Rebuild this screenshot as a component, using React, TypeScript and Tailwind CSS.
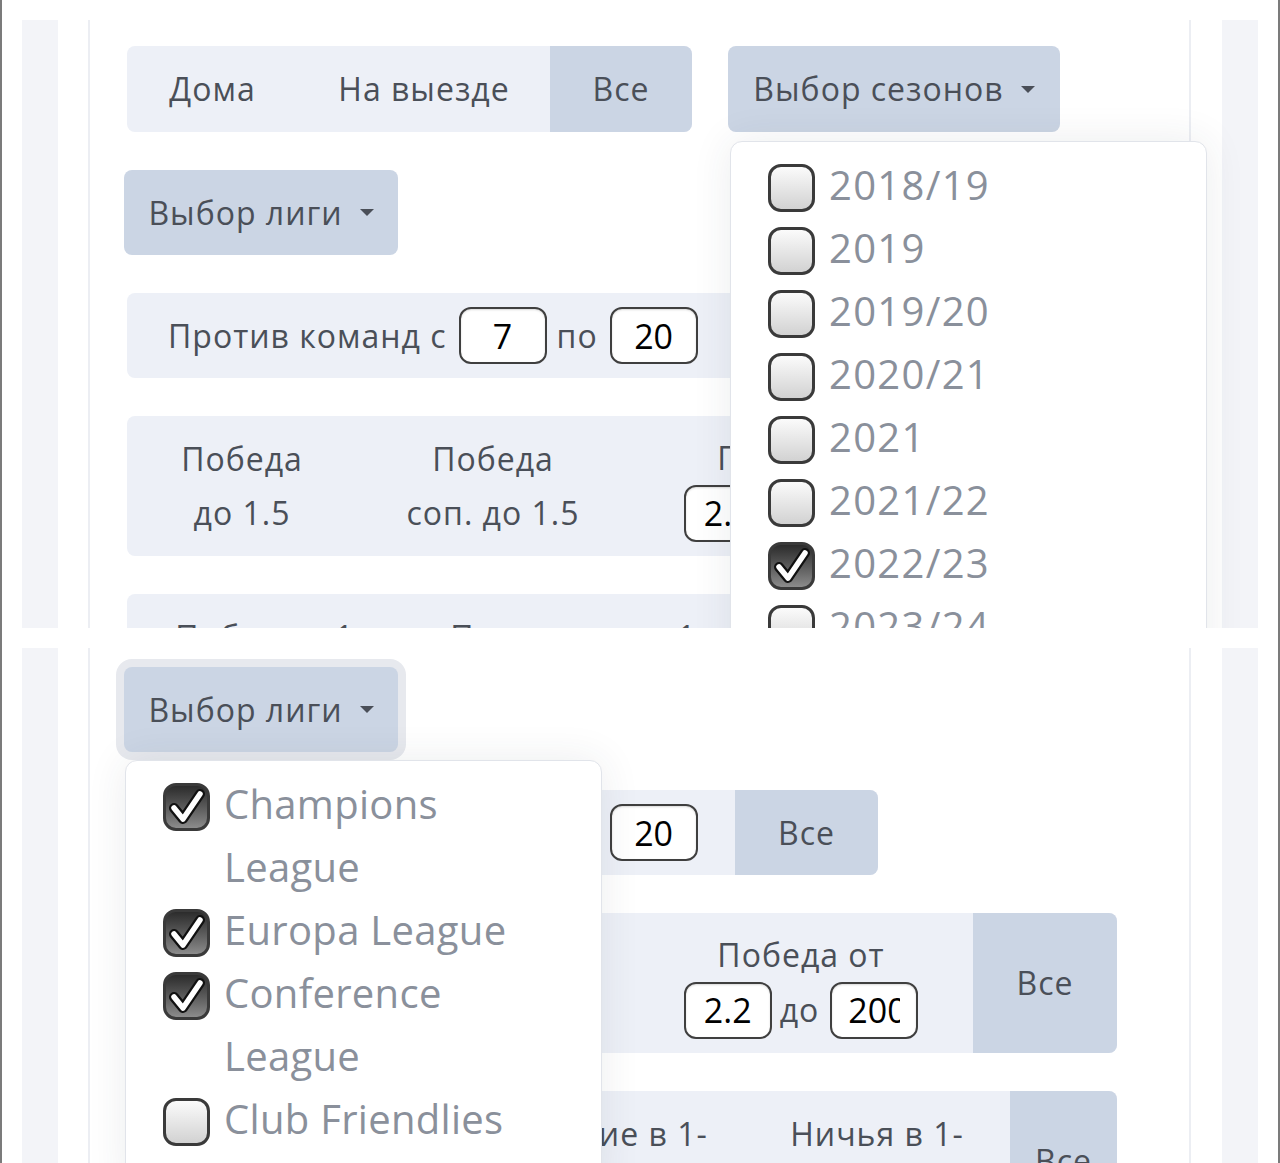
import React from 'react';

type Open = 'seasons' | 'leagues';
type Item = { label: string; checked: boolean };

const seasons: Item[] = [
  { label: '2018/19', checked: false },
  { label: '2019', checked: false },
  { label: '2019/20', checked: false },
  { label: '2020/21', checked: false },
  { label: '2021', checked: false },
  { label: '2021/22', checked: false },
  { label: '2022/23', checked: true },
  { label: '2023/24', checked: false },
  { label: '2024/25', checked: false },
];

const leagues: Item[] = [
  { label: 'Champions League', checked: true },
  { label: 'Europa League', checked: true },
  { label: 'Conference League', checked: true },
  { label: 'Club Friendlies', checked: false },
];

const Caret: React.FC = () => (
  <span className="ml-[17px] inline-block h-0 w-0 border-x-[7px] border-t-[7px] border-x-transparent border-t-[#4a4f58]" />
);

const Checkbox: React.FC<{ checked: boolean }> = ({ checked }) => (
  <span
    className={
      'mt-[11px] flex h-[48px] w-[47px] shrink-0 items-center justify-center rounded-[13px] border-[3px] border-[#3a3a3a] ' +
      (checked ? 'bg-linear-to-b from-[#2c2c2c] to-[#8c8c8c]' : 'bg-linear-to-b from-[#fbfbfb] to-[#d2d2d2]')
    }
  >
    {checked && (
      <svg width="40" height="40" viewBox="0 0 40 40">
        <path d="M7 21 L16 32 L33 7" fill="none" stroke="#111" strokeWidth="10" strokeLinecap="round" strokeLinejoin="round" />
        <path d="M7 21 L16 32 L33 7" fill="none" stroke="#fff" strokeWidth="5.5" strokeLinecap="round" strokeLinejoin="round" />
      </svg>
    )}
  </span>
);

const Menu: React.FC<{ items: Item[]; className: string; wide?: boolean }> = ({ items, className, wide }) => (
  <div
    className={
      'absolute z-10 w-[477px] rounded-[12px] border border-[#e1e4ea] bg-white pb-[40px] pl-[37px] pr-[37px] pt-[11px] shadow-[0_0_40px_rgba(40,50,70,0.09)] ' +
      className
    }
  >
    {items.map((it) => (
      <label key={it.label} className="flex items-start gap-[14px]">
        <Checkbox checked={it.checked} />
        <span
          className={
            'text-[40px] leading-[63px] text-[#8a909b] ' + (wide ? 'tracking-[1.3px]' : 'tracking-[0.3px]')
          }
        >
          {it.label}
        </span>
      </label>
    ))}
  </div>
);

const NumInput: React.FC<{ value: string; className?: string }> = ({ value, className = '' }) => (
  <input
    readOnly
    value={value}
    className={
      "h-[57px] w-[88px] shrink-0 rounded-[12px] border-2 border-[#3f3f3f] bg-white px-[16px] text-center font-['Open_Sans',sans-serif] text-[34px] tracking-normal text-black shadow-[inset_0_1px_2px_rgba(0,0,0,0.15)] outline-none " +
      className
    }
  />
);

const Page: React.FC<{ open: Open }> = ({ open }) => (
  <div className="flex pt-[20px]">
    <div className="w-[20px] shrink-0" />
    <div className="w-[36px] shrink-0 bg-[#f3f4f8]" />
    <div className="w-[30px] shrink-0" />
    <div className="w-[2px] shrink-0 bg-[#eceef3]" />

    <main className="flex min-w-0 flex-1 flex-col items-start gap-[38px] pb-[160px] pl-[37px] pt-[26px]">
      <div className="flex items-start gap-[36px]">
        <div className="flex h-[86px] overflow-hidden rounded-[8px] bg-[#edf0f7]">
          <span className="flex w-[171px] items-center justify-center">Дома</span>
          <span className="flex w-[252px] items-center justify-center">На выезде</span>
          <span className="flex w-[142px] items-center justify-center bg-[#cbd5e4]">Все</span>
        </div>
        <div className="relative">
          <button className="flex h-[86px] w-[332px] items-center justify-center rounded-[8px] bg-[#cbd5e4]">
            Выбор сезонов
            <Caret />
          </button>
          {open === 'seasons' && <Menu items={seasons} wide className="left-[2px] top-[95px]" />}
        </div>
      </div>

      <div className="relative -ml-[3px]">
        <button
          className={
            'flex h-[85px] w-[274px] items-center justify-center rounded-[8px] bg-[#cbd5e4] ' +
            (open === 'leagues' ? 'ring-8 ring-[#e7e9ee]' : '')
          }
        >
          Выбор лиги
          <Caret />
        </button>
        {open === 'leagues' && <Menu items={leagues} className="left-[1px] top-[93px]" />}
      </div>

      <div className="flex h-[85px] overflow-hidden rounded-[8px] bg-[#edf0f7]">
        <div className="flex w-[608px] items-center pl-[41px]">
          <span>Против команд с</span>
          <NumInput value="7" className="ml-[12px]" />
          <span className="ml-[10px]">по</span>
          <NumInput value="20" className="ml-[12px]" />
        </div>
        <div className="flex w-[143px] items-center justify-center bg-[#cbd5e4]">Все</div>
      </div>

      <div className="flex h-[140px] overflow-hidden rounded-[8px] bg-[#edf0f7] leading-[54px]">
        <div className="flex w-[230px] flex-col items-center justify-center text-center">
          <span>Победа</span>
          <span>до 1.5</span>
        </div>
        <div className="flex w-[272px] flex-col items-center justify-center text-center">
          <span>Победа</span>
          <span>соп. до 1.5</span>
        </div>
        <div className="flex w-[344px] flex-col items-center justify-center text-center">
          <span>Победа от</span>
          <div className="flex items-center">
            <NumInput value="2.2" />
            <span className="ml-[8px]">до</span>
            <NumInput value="200" className="ml-[11px]" />
          </div>
        </div>
        <div className="flex w-[144px] items-center justify-center bg-[#cbd5e4]">Все</div>
      </div>

      <div className="flex h-[140px] overflow-hidden rounded-[8px] bg-[#edf0f7] leading-[54px]">
        <div className="flex w-[287px] flex-col items-center justify-center text-center">
          <span>Победа в 1-</span>
          <span>м тайме</span>
        </div>
        <div className="flex w-[330px] flex-col items-center justify-center text-center">
          <span>Поражение в 1-</span>
          <span>м тайме</span>
        </div>
        <div className="flex w-[266px] flex-col items-center justify-center text-center">
          <span>Ничья в 1-</span>
          <span>м тайме</span>
        </div>
        <div className="flex w-[107px] items-center justify-center bg-[#cbd5e4]">Все</div>
      </div>
    </main>

    <div className="w-[2px] shrink-0 bg-[#eceef3]" />
    <div className="w-[31px] shrink-0" />
    <div className="w-[36px] shrink-0 bg-[#f3f4f8]" />
    <div className="w-[20px] shrink-0" />
  </div>
);

export default function App() {
  return (
    <div className="flex h-[1163px] w-full flex-col overflow-hidden border-x-2 border-[#7b7b7b] bg-white font-['Open_Sans',sans-serif] text-[32px] tracking-[1px] text-[#4a4f58]">
      <div className="h-[628px] shrink-0 overflow-hidden">
        <Page open="seasons" />
      </div>
      <div className="h-[20px] shrink-0" />
      <div className="h-[515px] shrink-0 overflow-hidden">
        <div className="-mt-[151px]">
          <Page open="leagues" />
        </div>
      </div>
    </div>
  );
}
